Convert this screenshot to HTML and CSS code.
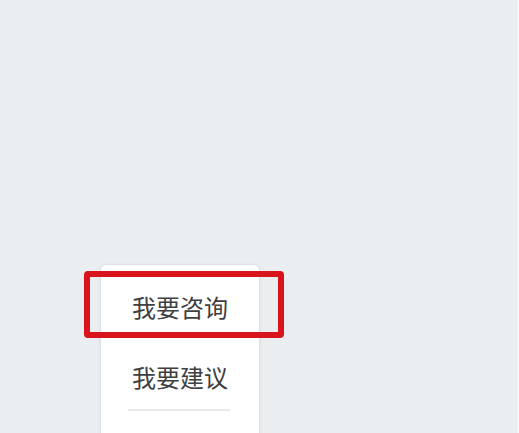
FILE: index.html
```html
<!DOCTYPE html>
<html lang="zh-CN">
<head>
<meta charset="utf-8">
<title>菜单</title>
<link rel="stylesheet" href="styles.css">
</head>
<body>
<div class="page">
  <div class="menu">
    <div class="item">我要咨询</div>
    <div class="item item-last">我要建议</div>
    <div class="divider"></div>
    <div class="spacer"></div>
  </div>
  <div class="highlight"></div>
</div>
</body>
</html>
```

FILE: styles.css
```css
html, body {
  margin: 0;
  padding: 0;
  height: 100%;
  overflow: hidden;
}
body {
  background: linear-gradient(to left, #ffffff 1px, #ebeef1 1px);
  font-family: "Noto Sans CJK SC", "Noto Sans", sans-serif;
}
.page {
  position: relative;
  height: 433px;
  padding-top: 264px;
  box-sizing: border-box;
  overflow: hidden;
}
.menu {
  margin-left: 100px;
  width: 160px;
  box-sizing: border-box;
  background: #ffffff;
  border: 1px solid #dfe2e6;
  border-radius: 6px;
  box-shadow: 0 1px 4px rgba(0, 0, 0, 0.06);
  padding-top: 7px;
}
.item {
  padding: 19px 0;
  font-size: 24px;
  line-height: 32px;
  color: #404040;
  text-align: center;
}
.item-last {
  padding-bottom: 16px;
}
.divider {
  height: 2px;
  margin: 0 29px 0 27px;
  background: #e6e8ea;
}
.spacer {
  height: 40px;
}
.highlight {
  position: absolute;
  left: 84px;
  top: 271px;
  width: 200px;
  height: 67px;
  box-sizing: border-box;
  border: 6px solid #d8141c;
  border-radius: 4px;
}
```
